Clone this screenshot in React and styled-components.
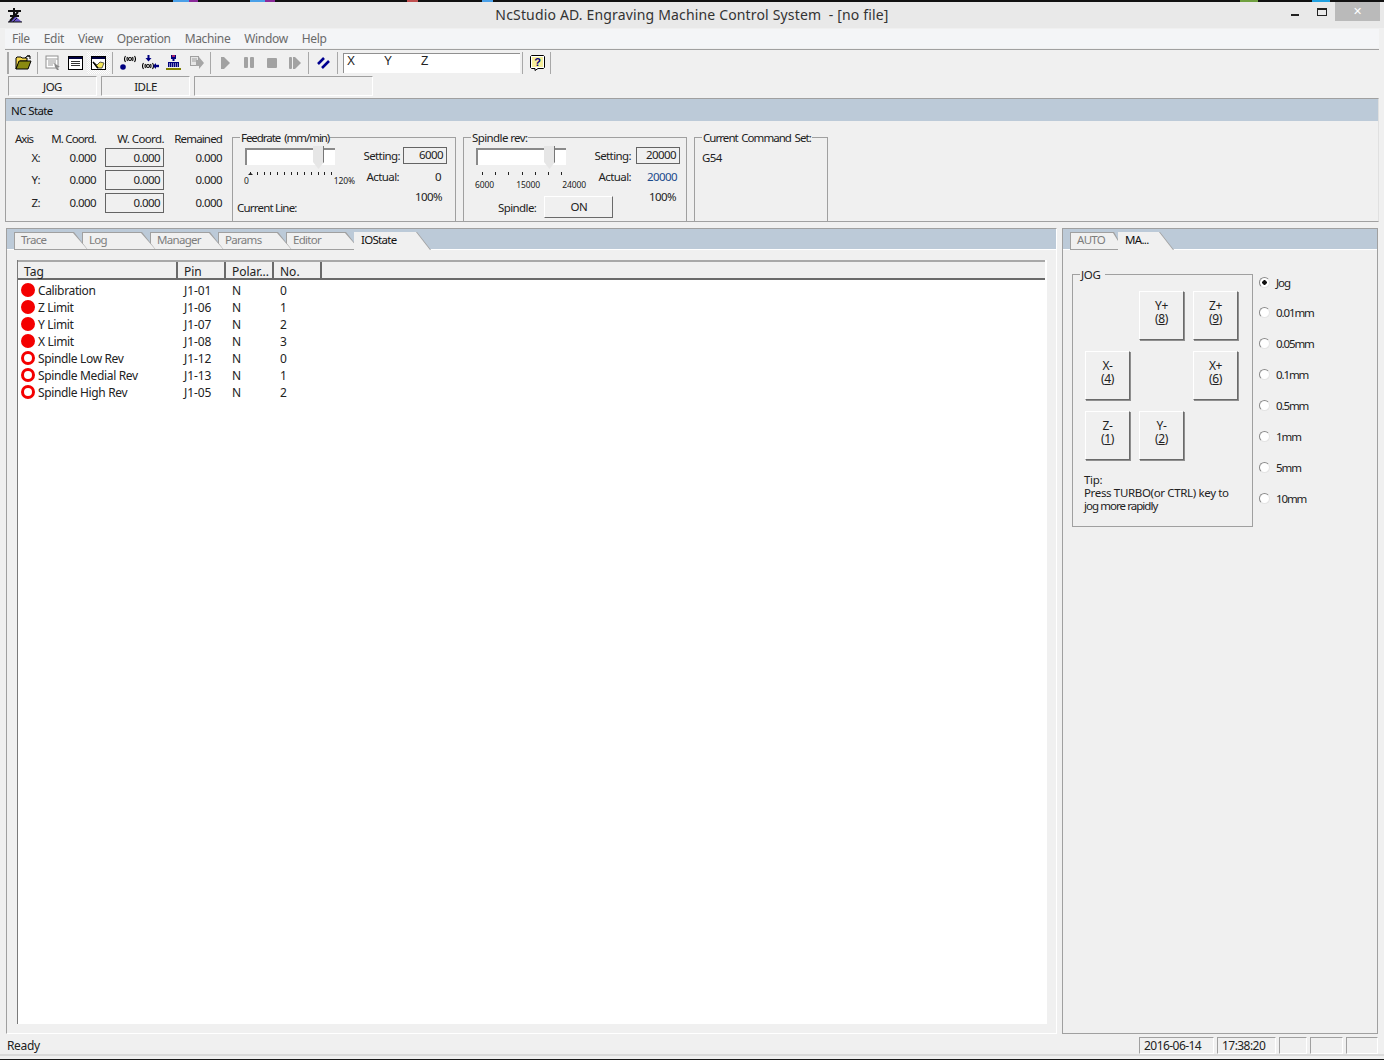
import React from "react";
import styled, { createGlobalStyle } from "styled-components";

const Global = createGlobalStyle`
  html, body { margin: 0; padding: 0; width: 1384px; height: 1060px; overflow: hidden; background: #f0f0f0; }
  body { font-family: "Noto Sans", "Liberation Sans", sans-serif; font-size: 12px; letter-spacing: -0.35px; color: #222; }
  #root { width: 1384px; height: 1060px; }
`;

const TAGS = [
  ["Calibration", "J1-01", "N", "0", true],
  ["Z Limit", "J1-06", "N", "1", true],
  ["Y Limit", "J1-07", "N", "2", true],
  ["X Limit", "J1-08", "N", "3", true],
  ["Spindle Low Rev", "J1-12", "N", "0", false],
  ["Spindle Medial Rev", "J1-13", "N", "1", false],
  ["Spindle High Rev", "J1-05", "N", "2", false],
];
const STEPS = ["0.01mm", "0.05mm", "0.1mm", "0.5mm", "1mm", "5mm", "10mm"];
const AXES = ["X", "Y", "Z"];
const TABS = ["Trace", "Log", "Manager", "Params", "Editor"];

const AppIcon = () => (
  <svg width="16" height="16" viewBox="0 0 16 16">
    <path d="M1 15 L8 9 L15 15 Z" fill="#6a55c8" />
    <path d="M2 15 L6 11 M6 15 L10 11" stroke="#222" strokeWidth="1" />
    <path d="M1 4 H14 M7 1 V9 M3 9 H12 M3 14 L11 5" stroke="#111" strokeWidth="2" fill="none" />
    <path d="M1 15 H15" stroke="#111" strokeWidth="1" />
  </svg>
);

const FolderIcon = () => (
  <svg width="17" height="15" viewBox="0 0 17 15">
    <path d="M1 3 L2 2 H6 L7 3 H12 V6 H5 L1 14 Z" fill="#f5d84e" stroke="#000" />
    <path d="M1 14 L4 6 H16 L13 14 Z" fill="#8a8a10" stroke="#000" />
    <path d="M10 3 Q12 0 15 1 M15 1 V4 M15 1 H12" fill="none" stroke="#000" />
  </svg>
);
const ReportIcon = () => (
  <svg width="16" height="16" viewBox="0 0 16 16">
    <rect x="1" y="1" width="12" height="12" fill="#fff" stroke="#8f8f8f" />
    <path d="M1 4 H13 M3 6 H11 M3 8 H11 M3 10 H8" stroke="#9a9a9a" />
    <path d="M9 8 L15 12 L12 12 L14 15 L12 15 L10 12 Z" fill="#8a8a8a" />
  </svg>
);
const WindowIcon = ({ $hot }) => (
  <svg width="15" height="14" viewBox="0 0 15 14">
    <rect x="0.5" y="0.5" width="14" height="13" fill="#fff" stroke="#000" />
    <rect x="1" y="1" width="13" height="2" fill="#000040" />
    {$hot ? (
      <>
        <path d="M2 6 L6 9 L9 6 L13 7 L11 12 H6 Z" fill="#f6e85a" stroke="#333" strokeWidth="0.8" />
        <path d="M2 6 L7 12" stroke="#000" strokeWidth="1.2" />
      </>
    ) : (
      <path d="M3 5.5 H12 M3 7.5 H12 M3 9.5 H12" stroke="#333" />
    )}
  </svg>
);
const WaveText = ({ x, y }) => (
  <g transform={`translate(${x} ${y})`} fill="none" stroke="#000" strokeWidth="1.1">
    <path d="M1 0 Q-1 3 1 6 M3 1 Q2 3 3 5 M8 1 Q9 3 8 5 M10 0 Q12 3 10 6" />
    <circle cx="5.5" cy="3" r="1.5" />
  </g>
);
const SignalIcon = () => (
  <svg width="16" height="15" viewBox="0 0 16 15">
    <circle cx="3" cy="12" r="2.8" fill="#000080" />
    <WaveText x={4.5} y={1} />
  </svg>
);
const SignalInIcon = () => (
  <svg width="17" height="15" viewBox="0 0 17 15">
    <path d="M6.5 0 V4" stroke="#000080" strokeWidth="2" />
    <path d="M3.5 3 H9.5 L6.5 6.5 Z" fill="#000080" />
    <WaveText x={0.5} y={8} />
    <path d="M12 11 H17" stroke="#000080" strokeWidth="2.4" />
    <path d="M14 8 L11 11 L14 14 Z" fill="#000080" />
  </svg>
);
const DrillIcon = () => (
  <svg width="16" height="15" viewBox="0 0 16 15">
    <rect x="5" y="0" width="5" height="4" fill="#000080" />
    <rect x="6" y="0" width="3" height="2" fill="#a0206a" />
    <path d="M7.5 4 V6" stroke="#000080" strokeWidth="2" />
    <rect x="2" y="7" width="11" height="5" fill="#000080" />
    <path d="M3 9 H12 M3 11 H12" stroke="#fff" strokeDasharray="1 1" />
    <path d="M0 14 H15" stroke="#7f7f00" strokeWidth="2" />
  </svg>
);
const PagePlayIcon = () => (
  <svg width="14" height="14" viewBox="0 0 14 14">
    <rect x="0.5" y="0.5" width="8" height="9" fill="#e6e6e6" stroke="#a0a0a0" />
    <path d="M2 3 H7 M2 5 H7" stroke="#a0a0a0" />
    <path d="M6 4 H9 V1 L14 7 L9 13 V10 H6 Z" fill="#a6a6a6" />
  </svg>
);
const GREY = "#a2a2a2";
const PlayIcon = () => (
  <svg width="10" height="12" viewBox="0 0 10 12"><path d="M0 0 H3 L9 6 L3 12 H0 Z" fill={GREY} /></svg>
);
const PauseIcon = () => (
  <svg width="10" height="11" viewBox="0 0 10 11"><rect width="4" height="11" rx="1" fill={GREY} /><rect x="6" width="4" height="11" rx="1" fill={GREY} /></svg>
);
const StopIcon = () => (
  <svg width="10" height="10" viewBox="0 0 10 10"><rect width="10" height="10" rx="1" fill={GREY} /></svg>
);
const StepIcon = () => (
  <svg width="12" height="12" viewBox="0 0 12 12"><rect width="3" height="12" rx="1" fill={GREY} /><path d="M4 0 H6 L12 6 L6 12 H4 Z" fill={GREY} /></svg>
);
const ZeroIcon = () => (
  <svg width="13" height="12" viewBox="0 0 13 12">
    <path d="M1 7 L7 1 M5 11 L12 4" stroke="#000090" strokeWidth="2.6" />
  </svg>
);
const HelpIcon = () => (
  <svg width="15" height="16" viewBox="0 0 15 16">
    <path d="M1.5 0.5 H13.5 L14.5 1.5 V12.5 L13.5 13.5 H8 L5 15.5 V13.5 H1.5 L0.5 12.5 V1.5 Z" fill="#fff" stroke="#000" />
    <rect x="2" y="2" width="11" height="10" fill="#f6ef9a" />
    <text x="7.5" y="11" textAnchor="middle" fontFamily="Liberation Sans" fontWeight="700" fontSize="11" fill="#000080">?</text>
  </svg>
);

const Scale = ({ count, step, arrow }) => (
  <svg width={(count - 1) * step + 6} height="5" viewBox={`-3 0 ${(count - 1) * step + 6} 5`}>
    {arrow && <path d="M-2 3 L0.5 0.5 L3 3 Z" fill="#222" />}
    {Array.from({ length: count }, (_, i) => (
      <rect key={i} x={Math.round(i * step)} y="0" width="1" height="3" fill="#222" />
    ))}
  </svg>
);

const App = () => (
  <>
    <Global />
    <Window>
      <DesktopEdge />
      <TitleBar>
        <AppIconBox><AppIcon /></AppIconBox>
        <Title>NcStudio AD. Engraving Machine Control System&nbsp; - [no file]</Title>
        <Controls>
          <MinimizeBtn />
          <MaximizeBtn />
          <CloseBtn>✕</CloseBtn>
        </Controls>
      </TitleBar>

      <MenuBar>
        {["File", "Edit", "View", "Operation", "Machine", "Window", "Help"].map((m) => (
          <MenuItem key={m}>{m}</MenuItem>
        ))}
      </MenuBar>

      <Toolbar>
        <Gripper />
        <ToolBtn><FolderIcon /></ToolBtn>
        <ToolSep />
        <ToolBtn><ReportIcon /></ToolBtn>
        <ToolBtn><WindowIcon /></ToolBtn>
        <ToolBtn $active><WindowIcon $hot /></ToolBtn>
        <ToolSep />
        <ToolBtn><SignalIcon /></ToolBtn>
        <ToolBtn><SignalInIcon /></ToolBtn>
        <ToolBtn><DrillIcon /></ToolBtn>
        <ToolBtn><PagePlayIcon /></ToolBtn>
        <ToolSep />
        <ToolBtn><PlayIcon /></ToolBtn>
        <ToolBtn><PauseIcon /></ToolBtn>
        <ToolBtn><StopIcon /></ToolBtn>
        <ToolBtn><StepIcon /></ToolBtn>
        <ToolSep />
        <ToolBtn><ZeroIcon /></ToolBtn>
        <ToolSep />
        <AxisField>
          <span>X</span><span>Y</span><span>Z</span>
        </AxisField>
        <ToolSep />
        <ToolBtn $narrow><HelpIcon /></ToolBtn>
        <ToolSep />
      </Toolbar>

      <ModeRow>
        <ModeBox $w={89}>JOG</ModeBox>
        <ModeBox $w={89}>IDLE</ModeBox>
        <ModeBox $w={179} />
      </ModeRow>

      <NcFrame>
        <NcHeader>NC State</NcHeader>
        <NcBody>
          <AxisGrid>
            <AxisHead $left>Axis</AxisHead>
            <AxisHead>M. Coord.</AxisHead>
            <AxisHead $box>W. Coord.</AxisHead>
            <AxisHead>Remained</AxisHead>
            {AXES.map((a) => (
              <React.Fragment key={a}>
                <AxisName>{a}:</AxisName>
                <AxisValue>0.000</AxisValue>
                <ValueBox>0.000</ValueBox>
                <AxisValue>0.000</AxisValue>
              </React.Fragment>
            ))}
          </AxisGrid>

          <GroupBox $w={224} $ml={10}>
            <GroupTitle $track={-1.05} $word={2}>Feedrate (mm/min)</GroupTitle>
            <RateGrid $first={131}>
              <RateSlider>
                <Track><Thumb /></Track>
                <TickRow $ml={14}><Scale count={13} step={6.75} arrow /></TickRow>
                <TickLabels>
                  <span>0</span><span>120%</span>
                </TickLabels>
              </RateSlider>
              <Readouts>
                <ReadoutRow $gap={3} $label={36}>
                  <span>Setting:</span>
                  <ValueBox $small>6000</ValueBox>
                </ReadoutRow>
                <ReadoutRow $gap={3} $label={35} $val={39}>
                  <span>Actual:</span>
                  <ReadValue>0</ReadValue>
                </ReadoutRow>
                <Percent $w={78}>100%</Percent>
              </Readouts>
              <CurrentLine>Current Line:</CurrentLine>
            </RateGrid>
          </GroupBox>

          <GroupBox $w={224} $ml={7}>
            <GroupTitle $track={-0.6}>Spindle rev:</GroupTitle>
            <RateGrid $first={131}>
              <RateSlider>
                <Track><Thumb /></Track>
                <TickRow $ml={15}><Scale count={7} step={13.2} /></TickRow>
                <SpeedLabels>
                  <span>6000</span><span>15000</span><span>24000</span>
                </SpeedLabels>
              </RateSlider>
              <Readouts>
                <ReadoutRow $gap={5} $label={36}>
                  <span>Setting:</span>
                  <ValueBox $small>20000</ValueBox>
                </ReadoutRow>
                <ReadoutRow $gap={5} $label={36} $val={41}>
                  <span>Actual:</span>
                  <ReadValue $blue>20000</ReadValue>
                </ReadoutRow>
                <Percent $w={81}>100%</Percent>
              </Readouts>
              <SpindleToggle>
                <span>Spindle:</span>
                <PushButton>ON</PushButton>
              </SpindleToggle>
            </RateGrid>
          </GroupBox>

          <GroupBox $w={134} $ml={7}>
            <GroupTitle $track={-0.95} $word={1.5}>Current Command Set:</GroupTitle>
            <CommandText>G54</CommandText>
          </GroupBox>
        </NcBody>
      </NcFrame>

      <Workspace>
        <LeftPanel>
          <TabStrip>
            <TabsIndent>
              {TABS.map((t, i) => (
                <Tab key={t} $w={74} $z={10 - i} $next={-6}><TabLabel>{t}</TabLabel></Tab>
              ))}
              <Tab $active $w={77} $z={11} $next={0}><TabLabel $active>IOState</TabLabel></Tab>
            </TabsIndent>
          </TabStrip>
          <ListWrap>
            <ListFrame>
              <ListHead>
                <HeadCell $w={160}>Tag</HeadCell>
                <HeadCell $w={48}>Pin</HeadCell>
                <HeadCell $w={48}>Polar...</HeadCell>
                <HeadCell $w={48}>No.</HeadCell>
                <HeadFill />
              </ListHead>
              {TAGS.map(([tag, pin, pol, no, on]) => (
                <ListRow key={tag}>
                  <TagCell><Led $on={on} />{tag}</TagCell>
                  <span>{pin}</span>
                  <span>{pol}</span>
                  <span>{no}</span>
                </ListRow>
              ))}
            </ListFrame>
          </ListWrap>
        </LeftPanel>

        <RightPanel>
          <TabStrip>
            <TabsIndent>
              <Tab $w={54} $z={2} $next={-6} $slope={10}><TabLabel>AUTO</TabLabel></Tab>
              <Tab $active $w={56} $z={3} $next={0}><TabLabel $active>MA...</TabLabel></Tab>
            </TabsIndent>
          </TabStrip>
          <JogArea>
            <JogGroup>
              <GroupTitle $track={-0.35} $gapRight={5}>JOG</GroupTitle>
              <JogPad>
                <JogBtn $col={2} $row={1}>Y+<br />(<u>8</u>)</JogBtn>
                <JogBtn $col={3} $row={1}>Z+<br />(<u>9</u>)</JogBtn>
                <JogBtn $col={1} $row={2}>X-<br />(<u>4</u>)</JogBtn>
                <JogBtn $col={3} $row={2}>X+<br />(<u>6</u>)</JogBtn>
                <JogBtn $col={1} $row={3}>Z-<br />(<u>1</u>)</JogBtn>
                <JogBtn $col={2} $row={3}>Y-<br />(<u>2</u>)</JogBtn>
              </JogPad>
              <TipText>Tip:<br />Press TURBO(or CTRL) key to<br /><TipTight>jog more rapidly</TipTight></TipText>
            </JogGroup>
            <RadioColumn>
              <RadioRow $first>
                <RadioDot $on />
                <span><u>J</u>og</span>
              </RadioRow>
              {STEPS.map((s) => (
                <RadioRow key={s}>
                  <RadioDot />
                  <span>{s}</span>
                </RadioRow>
              ))}
            </RadioColumn>
          </JogArea>
        </RightPanel>
      </Workspace>

      <StatusBar>
        <StatusText>Ready</StatusText>
        <StatusPane $w={75}>2016-06-14</StatusPane>
        <StatusPane $w={59}>17:38:20</StatusPane>
        <StatusPane $w={28} />
        <StatusPane $w={33} />
        <StatusPane $w={32} />
      </StatusBar>
      <FootLine />
      <BottomEdge />
    </Window>
  </>
);

export default App;

// region STYLES

const BORDER = "#a0a0a0";
const STRIP = "#bccad8";

const Window = styled.div`
  width: 1384px;
  height: 1060px;
  display: flex;
  flex-direction: column;
  background: #f0f0f0;
`;

const DesktopEdge = styled.div`
  height: 2px;
  flex: none;
  background: linear-gradient(90deg,
    #111 0 173px, #4aa0e8 173px 189px, #8a2a9a 189px 198px, #111 198px 250px,
    #4aa0e8 250px 265px, #8a2a9a 265px 275px, #111 275px 407px, #c05050 407px 418px,
    #111 418px 482px, #4aa0e8 482px 493px, #111 493px 1240px, #70a040 1240px 1258px,
    #111 1258px 1312px, #20a0e0 1312px 1330px, #111 1330px);
`;

const TitleBar = styled.div`
  height: 26px;
  flex: none;
  background: #e9e9e9;
  display: grid;
  grid-template-columns: 1fr auto 1fr;
  align-items: start;
`;

const AppIconBox = styled.div`
  padding: 5px 0 0 7px;
  height: 16px;
`;

const Title = styled.div`
  font-size: 14px;
  letter-spacing: 0.16px;
  line-height: 26px;
  color: #333;
`;

const Controls = styled.div`
  display: flex;
  justify-content: flex-end;
  align-items: flex-start;
  padding-right: 4px;
`;

const MinimizeBtn = styled.div`
  width: 8px;
  height: 2px;
  margin: 12px 18px 0 0;
  background: #222;
`;

const MaximizeBtn = styled.div`
  width: 10px;
  height: 8px;
  box-sizing: border-box;
  margin: 6px 8px 0 0;
  border: 1px solid #222;
  border-top-width: 2px;
`;

const CloseBtn = styled.div`
  width: 45px;
  height: 19px;
  background: #bababa;
  color: #fff;
  font-family: "DejaVu Sans", sans-serif;
  font-size: 11px;
  font-weight: 700;
  line-height: 19px;
  text-align: center;
`;

const MenuBar = styled.div`
  height: 19px;
  flex: none;
  margin: 1px 5px 0;
  padding-left: 7px;
  background: #f4f5f7;
  display: flex;
  gap: 14px;
  align-items: center;
`;

const MenuItem = styled.span`
  color: #6a6a6a;
`;

const Toolbar = styled.div`
  height: 26px;
  flex: none;
  margin: 1px 5px 0;
  border-top: 1px solid ${BORDER};
  padding-left: 2px;
  display: flex;
  align-items: center;
  box-sizing: border-box;
`;

const Gripper = styled.div`
  width: 2px;
  height: 22px;
  margin-right: 3px;
  background: #a8a8a8;
`;

const ToolBtn = styled.div`
  width: ${(p) => (p.$narrow ? 22 : 23)}px;
  height: 22px;
  flex: none;
  display: flex;
  align-items: center;
  justify-content: center;
  background: ${(p) => (p.$active ? "repeating-conic-gradient(#e8e8e8 0 25%, #fff 0 50%) 0 0 / 2px 2px" : "transparent")};
`;

const ToolSep = styled.div`
  width: 1px;
  height: 22px;
  flex: none;
  margin: 0 3px 0 2px;
  background: #a8a8a8;
`;

const AxisField = styled.div`
  width: 177px;
  height: 20px;
  flex: none;
  margin-left: 2px;
  box-sizing: border-box;
  background: #fff;
  border-top: 1px solid #909090;
  border-left: 1px solid #909090;
  padding-left: 3px;
  display: flex;
  font-family: "Liberation Sans", sans-serif;
  line-height: 15px;
  letter-spacing: 0;

  span {
    width: 37px;
  }
`;

const ModeRow = styled.div`
  height: 20px;
  flex: none;
  margin: 1px 0 0 8px;
  display: flex;
  gap: 4px;
  font-size: 11.5px;
  letter-spacing: -0.5px;
`;

const ModeBox = styled.div`
  width: ${(p) => p.$w}px;
  box-sizing: border-box;
  border: 1px solid #fff;
  border-top-color: ${BORDER};
  border-left-color: ${BORDER};
  text-align: center;
  line-height: 19px;
`;

const NcFrame = styled.div`
  height: 124px;
  flex: none;
  margin: 2px 5px 0;
  box-sizing: border-box;
  border: 1px solid ${BORDER};
  border-right-color: #e0e0e0;
  display: flex;
  flex-direction: column;
  font-size: 11.5px;
  letter-spacing: -0.6px;
`;

const NcHeader = styled.div`
  height: 22px;
  flex: none;
  padding-left: 5px;
  background: ${STRIP};
  line-height: 23px;
  color: #111;
`;

const NcBody = styled.div`
  flex: 1;
  display: flex;
  align-items: stretch;
  padding-top: 16px;
`;

const AxisGrid = styled.div`
  display: grid;
  grid-template-columns: 25px 56px 68px 58px;
  grid-template-rows: 12px 19px 20px 20px;
  row-gap: 3px;
  margin: -5px 0 0 9px;
  padding-top: 1px;
  align-items: center;
  align-self: flex-start;
`;

const AxisHead = styled.div`
  text-align: ${(p) => (p.$left ? "left" : "right")};
  white-space: nowrap;
  line-height: 12px;
  letter-spacing: ${(p) => (p.$left ? -1 : p.$box ? -0.6 : -0.85)}px;
`;

const AxisName = styled.div`
  text-align: right;
  padding-bottom: 1px;
`;

const AxisValue = styled.div`
  text-align: right;
  padding-bottom: 1px;
`;

const ValueBox = styled.div`
  width: ${(p) => (p.$small ? 44 : 59)}px;
  height: ${(p) => (p.$small ? "17px" : "100%")};
  line-height: ${(p) => (p.$small ? 14 : 17)}px;
  justify-self: end;
  box-sizing: border-box;
  border: 1px solid #646464;
  padding-right: 3px;
  text-align: right;
`;

const GroupBox = styled.div`
  position: relative;
  width: ${(p) => p.$w}px;
  margin-left: ${(p) => p.$ml}px;
  box-sizing: border-box;
  flex: none;
  border: 1px solid ${BORDER};
  border-bottom: none;
`;

const GroupTitle = styled.div`
  position: absolute;
  top: -7px;
  left: 7px;
  padding: 0 ${(p) => p.$gapRight || 1}px 0 1px;
  background: #f0f0f0;
  font-size: 11.5px;
  letter-spacing: ${(p) => p.$track}px;
  word-spacing: ${(p) => p.$word || 0}px;
  line-height: 14px;
  white-space: nowrap;
`;

const RateGrid = styled.div`
  display: grid;
  grid-template-columns: ${(p) => p.$first}px auto;
  grid-template-rows: 58px 1fr;
  padding-top: 9px;
  height: 100%;
  box-sizing: border-box;
`;

const RateSlider = styled.div`
  display: flex;
  flex-direction: column;
`;

const Track = styled.div`
  position: relative;
  width: 90px;
  height: 17px;
  margin: 1px 0 0 12px;
  box-sizing: border-box;
  background: #fff;
  border-top: 2px solid #8a8a8a;
  border-left: 2px solid #8a8a8a;
`;

const Thumb = styled.div`
  position: absolute;
  top: -4px;
  left: 66px;
  width: 10px;
  height: 23px;
  background: #e6e6e6;
  border-right: 1px solid #777;
  clip-path: polygon(0 0, 100% 0, 100% 70%, 50% 100%, 0 70%);
`;

const TickRow = styled.div`
  display: flex;
  height: 5px;
  margin: 7px 0 0 ${(p) => p.$ml}px;
`;

const TickLabels = styled.div`
  width: 111px;
  margin: -2px 0 0 11px;
  display: flex;
  justify-content: space-between;
  font-size: 8.5px;
  letter-spacing: -0.1px;
  line-height: 11px;
`;

const SpeedLabels = styled.div`
  width: 111px;
  margin: 1px 0 0 11px;
  display: flex;
  justify-content: space-between;
  font-size: 8.5px;
  letter-spacing: -0.1px;
  line-height: 13px;
`;

const Readouts = styled.div`
  display: flex;
  flex-direction: column;
  align-items: flex-start;
  grid-row: 1 / 3;
  grid-column: 2;
`;

const ReadoutRow = styled.div`
  display: grid;
  grid-template-columns: ${(p) => p.$label}px ${(p) => (p.$val ? `${p.$val}px` : "auto")};
  column-gap: ${(p) => p.$gap}px;
  align-items: center;
  height: 17px;
  margin-bottom: 4px;
  justify-items: end;
  white-space: nowrap;
`;

const ReadValue = styled.span`
  color: ${(p) => (p.$blue ? "#1a4a8c" : "inherit")};
  justify-self: end;
`;

const Percent = styled.div`
  width: ${(p) => p.$w}px;
  text-align: right;
  line-height: 16px;
`;

const CurrentLine = styled.div`
  grid-column: 1;
  grid-row: 2;
  margin-top: -5px;
  padding-left: 4px;
  white-space: nowrap;
  line-height: 16px;
  letter-spacing: -0.8px;
`;

const SpindleToggle = styled.div`
  grid-column: 1 / 3;
  grid-row: 2;
  padding-left: 34px;
  display: flex;
  gap: 8px;
  align-items: center;
  height: 22px;
  margin-top: -9px;
`;

const PushButton = styled.button`
  width: 69px;
  height: 22px;
  padding: 0 0 2px;
  font: inherit;
  letter-spacing: inherit;
  color: inherit;
  background: #f0f0f0;
  border: 1px solid;
  border-color: #fff #6a6a6a #6a6a6a #fff;
`;

const CommandText = styled.div`
  margin: 12px 0 0 7px;
`;

const Workspace = styled.div`
  flex: 1;
  min-height: 0;
  display: flex;
  gap: 5px;
  margin: 6px 6px 0;
`;

const Panel = styled.div`
  box-sizing: border-box;
  border: 1px solid ${BORDER};
  display: flex;
  flex-direction: column;
`;

const LeftPanel = styled(Panel)`
  width: 1051px;
  border-right-color: #fff;
  border-bottom-color: #fff;
`;

const RightPanel = styled(Panel)`
  width: 316px;
`;

const TabStrip = styled.div`
  height: 21px;
  box-sizing: border-box;
  flex: none;
  background: ${STRIP};
  border-bottom: 1px solid #fff;
`;

const TabsIndent = styled.div`
  display: flex;
  height: 21px;
  padding: 3px 0 0 7px;
  box-sizing: border-box;
`;

const Tab = styled.div`
  position: relative;
  width: ${(p) => p.$w}px;
  height: 18px;
  flex: none;
  margin-right: ${(p) => p.$next}px;
  z-index: ${(p) => p.$z};
  background: ${BORDER};
  font-size: 11.5px;
  line-height: 15px;
  letter-spacing: -0.7px;
  clip-path: polygon(0 0, calc(100% - ${(p) => p.$slope || 14}px) 0, 100% 100%, 0 100%);

  &::after {
    content: "";
    position: absolute;
    inset: ${(p) => (p.$active ? "0 0 0 0" : "1px 0 1px 1px")};
    background: #f0f0f0;
    clip-path: polygon(0 0, calc(100% - ${(p) => (p.$slope || 14) + 1}px) 0, calc(100% - 1px) 100%, 0 100%);
  }
`;

const TabLabel = styled.span`
  position: relative;
  z-index: 1;
  padding-left: 7px;
  color: ${(p) => (p.$active ? "#111" : "#7d7d7d")};
`;

const ListWrap = styled.div`
  flex: 1;
  min-height: 0;
  padding: 10px 0 9px 10px;
`;

const ListFrame = styled.div`
  height: 100%;
  width: 1030px;
  box-sizing: border-box;
  background: #fff;
  border-left: 1px solid #7a7a7a;
`;

const ListHead = styled.div`
  display: flex;
  height: 20px;
  box-sizing: border-box;
  margin: 0 2px 2px 0;
  background: #f0f0f0;
  border-top: 2px solid #a8a8a8;
  border-bottom: 2px solid #6a6a6a;
`;

const HeadCell = styled.div`
  width: ${(p) => p.$w}px;
  box-sizing: border-box;
  flex: none;
  padding-left: 6px;
  border-right: 2px solid #6a6a6a;
  line-height: 19px;
  letter-spacing: 0;
`;

const HeadFill = styled.div`
  flex: 1;
`;

const ListRow = styled.div`
  display: grid;
  grid-template-columns: 166px 48px 48px 48px;
  height: 17px;
  align-items: center;
  letter-spacing: -0.1px;
`;

const TagCell = styled.div`
  display: flex;
  align-items: center;
  gap: 3px;
  padding-left: 3px;
  white-space: nowrap;
  letter-spacing: -0.35px;
`;

const Led = styled.i`
  width: 14px;
  height: 14px;
  box-sizing: border-box;
  flex: none;
  margin-top: -1px;
  border-radius: 50%;
  border: 3px solid #f40000;
  background: ${(p) => (p.$on ? "#f40000" : "#fff")};
`;

const JogArea = styled.div`
  flex: 1;
  display: flex;
  align-items: flex-start;
  padding: 24px 0 0 9px;
`;

const JogGroup = styled.div`
  position: relative;
  width: 181px;
  height: 253px;
  box-sizing: border-box;
  flex: none;
  border: 1px solid ${BORDER};
  padding: 16px 0 0 12px;
`;

const JogPad = styled.div`
  display: grid;
  grid-template-columns: repeat(3, 45px);
  grid-template-rows: repeat(3, 49px);
  column-gap: 9px;
  row-gap: 11px;
`;

const JogBtn = styled.button`
  grid-column: ${(p) => p.$col};
  grid-row: ${(p) => p.$row};
  padding: 0 0 8px;
  font: inherit;
  letter-spacing: inherit;
  line-height: 13px;
  color: #222;
  background: #f0f0f0;
  border: 1px solid;
  border-color: #fff #6a6a6a #6a6a6a #fff;
  box-shadow: 1px 1px 0 #8f8f8f;
`;

const TipText = styled.div`
  margin: 13px 0 0 -1px;
  line-height: 13px;
  white-space: nowrap;
  font-size: 11.5px;
`;

const TipTight = styled.span`
  letter-spacing: -0.95px;
`;

const RadioColumn = styled.div`
  display: flex;
  flex-direction: column;
  padding: 0 0 0 6px;
  font-size: 11.5px;
  letter-spacing: -1.1px;
`;

const RadioRow = styled.div`
  height: ${(p) => (p.$first ? 30 : 31)}px;
  display: flex;
  align-items: center;
  gap: 6px;
  margin-top: ${(p) => (p.$first ? "-7px" : "0")};
`;

const RadioDot = styled.i`
  width: 11px;
  height: 11px;
  box-sizing: border-box;
  flex: none;
  border-radius: 50%;
  background: ${(p) => (p.$on ? "radial-gradient(circle, #111 0 2px, #fff 2.5px)" : "#fff")};
  border: 1px solid #8a8a8a;
  border-right-color: #e4e4e4;
  border-bottom-color: #e4e4e4;
`;

const StatusBar = styled.div`
  height: 20px;
  flex: none;
  display: flex;
  gap: 3px;
  align-items: flex-end;
  padding: 0 6px 0 7px;
`;

const StatusText = styled.div`
  flex: 1;
  align-self: flex-start;
  line-height: 24px;
`;

const StatusPane = styled.div`
  width: ${(p) => p.$w}px;
  height: 17px;
  box-sizing: border-box;
  flex: none;
  padding-left: 4px;
  border: 1px solid #fff;
  border-top-color: ${BORDER};
  border-left-color: ${BORDER};
  line-height: 16px;
  letter-spacing: -0.55px;
`;

const FootLine = styled.div`
  height: 2px;
  flex: none;
  margin-bottom: 3px;
  background: #dadada;
`;

const BottomEdge = styled.div`
  height: 1px;
  flex: none;
  background: #1a1a1a;
`;

// endregion
